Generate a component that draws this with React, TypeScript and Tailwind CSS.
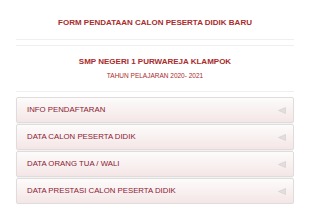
import React from 'react'

const items = [
  'INFO PENDAFTARAN',
  'DATA CALON PESERTA DIDIK',
  'DATA ORANG TUA / WALI',
  'DATA PRESTASI CALON PESERTA DIDIK',
]

function Arrow() {
  return (
    <svg width="8" height="7" viewBox="0 0 8 7" className="shrink-0">
      <path d="M0.5 3.5 L7.5 0.5 L7.5 6.5 Z" fill="#e2dede" stroke="#d2cccc" strokeWidth="0.6" />
    </svg>
  )
}

export default function App() {
  return (
    <div className="w-[310px] h-[204px] bg-white overflow-hidden px-4 font-['Liberation_Sans',Arial,sans-serif]">
      <div className="pt-[17px] text-center text-[8px] leading-[12px] font-bold text-[#a92c2c]">
        FORM PENDATAAN CALON PESERTA DIDIK BARU
      </div>
      <div className="mt-[10px] border-t border-[#f0eeee]" />
      <div className="mt-[5px] border-t border-[#f0eeee]" />
      <div className="mt-[10px] text-center text-[8px] leading-[12px] font-bold text-[#a92c2c]">
        SMP NEGERI 1 PURWAREJA KLAMPOK
      </div>
      <div className="mt-[3px] text-center text-[6.5px] leading-[10px] text-[#a92c2c]">
        TAHUN PELAJARAN 2020- 2021
      </div>
      <div className="mt-[10px] border-t border-[#f0eeee]" />
      <div className="mt-[5px] flex flex-col gap-[1px]">
        {items.map((t) => (
          <div
            key={t}
            className="h-[26px] flex items-center justify-between pl-[10px] pr-[7px] border border-[#e0dcdc] rounded-[2px] bg-gradient-to-b from-[#fdfbfb] to-[#f4e6e6] shadow-[0_1px_1px_rgba(0,0,0,0.06)]"
          >
            <span className="text-[7.8px] leading-none text-[#8c2030]">{t}</span>
            <Arrow />
          </div>
        ))}
      </div>
    </div>
  )
}
